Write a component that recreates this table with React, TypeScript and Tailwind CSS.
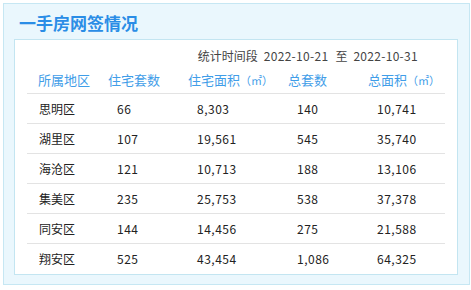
import React from "react";

const rows = [
  ["思明区", "66", "8,303", "140", "10,741"],
  ["湖里区", "107", "19,561", "545", "35,740"],
  ["海沧区", "121", "10,713", "188", "13,106"],
  ["集美区", "235", "25,753", "538", "37,378"],
  ["同安区", "144", "14,456", "275", "21,588"],
  ["翔安区", "525", "43,454", "1,086", "64,325"],
];

const font = { fontFamily: '"Noto Sans CJK SC", "Noto Sans", sans-serif' };

export default function App() {
  return (
    <div className="w-[471px] h-[290px] bg-white pt-[3px] pl-[3px]" style={font}>
      <div className="w-[467px] h-[282px] border border-[#c6e7f3] bg-[#eaf7fd] flex flex-col">
        <div className="h-[35px] pl-[15px] flex items-center">
          <span className="text-[17px] leading-[20px] font-bold text-[#2a8de6] mt-[2px]">一手房网签情况</span>
        </div>
        <div className="ml-[10px] w-[444px] h-[236px] border border-[#c3e5f1] bg-white flex flex-col">
          <div className="h-[28px] pt-[8px] pr-[39px] flex justify-end text-[12px] leading-[16px] text-[#444]">
            <span>统计时间段</span>
            <span className="ml-[6px] tracking-[0.3px]">2022-10-21</span>
            <span className="ml-[7px]">至</span>
            <span className="ml-[6px] tracking-[0.3px]">2022-10-31</span>
          </div>
          <div className="mx-[12px] flex flex-col">
            <div className="grid grid-cols-[81px_80px_100px_80px_77px] h-[27px] items-center border-b border-[#e3e3e3] text-[13px] leading-[16px] text-[#3f9de8]">
              <div className="pl-[11px]">所属地区</div>
              <div>住宅套数</div>
              <div className="whitespace-nowrap">住宅面积<span className="text-[11px]">（㎡）</span></div>
              <div>总套数</div>
              <div className="whitespace-nowrap">总面积<span className="text-[11px]">（㎡）</span></div>
            </div>
            {rows.map((r, i) => (
              <div
                key={r[0]}
                className={
                  "grid grid-cols-[81px_80px_100px_80px_77px] h-[30px] items-center text-[12px] leading-[16px] text-[#222] " +
                  (i < rows.length - 1 ? "border-b border-[#e3e3e3]" : "")
                }
              >
                <div className="pl-[12px]">{r[0]}</div>
                <div className="pl-[9px] tracking-[0.5px]">{r[1]}</div>
                <div className="pl-[9px] tracking-[0.5px]">{r[2]}</div>
                <div className="pl-[9px] tracking-[0.5px]">{r[3]}</div>
                <div className="pl-[9px] tracking-[0.5px]">{r[4]}</div>
              </div>
            ))}
          </div>
        </div>
      </div>
    </div>
  );
}
